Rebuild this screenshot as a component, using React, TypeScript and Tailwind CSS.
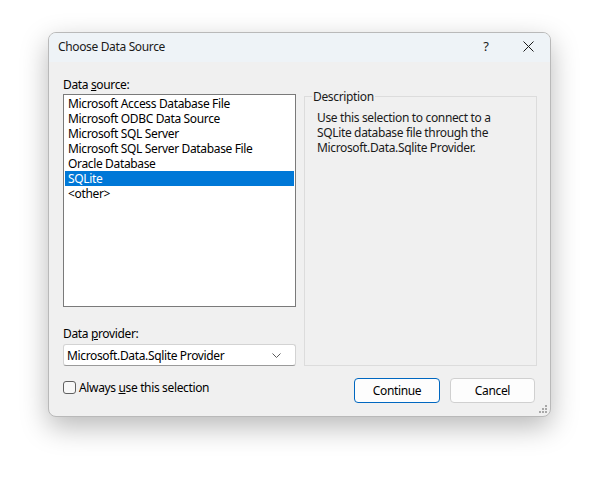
import type { FC } from 'react';

const sources = [
    'Microsoft Access Database File',
    'Microsoft ODBC Data Source',
    'Microsoft SQL Server',
    'Microsoft SQL Server Database File',
    'Oracle Database',
    'SQLite',
    '<other>',
];

const font = { fontFamily: '"Noto Sans", "Open Sans", sans-serif' };

const App: FC = () => {
    const selected = 'SQLite';

    return (
        <div className="w-[600px] h-[498px] bg-white pl-[48px] pt-[32px] text-[12px] leading-[15px] tracking-[-0.35px] text-black" style={font}>
            <div className="relative w-[503px] h-[385px] flex flex-col rounded-[8px] border border-[#b9b9b9] bg-[#f0f0f0] shadow-[0_10px_28px_rgba(0,0,0,0.28)] overflow-hidden">
                {/* Title bar */}
                <div className="h-[29px] shrink-0 flex items-center bg-[#eef3f7] pl-[9px] pb-[2px]">
                    <span className="flex-1 text-[#1a1a1a]">Choose Data Source</span>
                    <span className="w-[20px] text-center text-[13px] text-[#1a1a1a] mr-[27px]">?</span>
                    <svg className="w-[11px] h-[11px] mr-[16px]" viewBox="0 0 11 11" fill="none" stroke="#1a1a1a" strokeWidth={1}>
                        <path d="M0.5 0.5l10 10M10.5 0.5l-10 10" />
                    </svg>
                </div>

                {/* Body */}
                <div className="flex-1 flex flex-col pl-[14px] pr-[13px] pt-[15px]">
                    <div className="flex gap-[8px]">
                        {/* Left column */}
                        <div className="w-[233px] flex flex-col">
                            <div className="h-[17px]">
                                Data <span className="underline">s</span>ource:
                            </div>
                            <div className="h-[213px] border border-[#7a7a7a] bg-white pt-[1px] px-[1px]">
                                {sources.map((s) => (
                                    <div
                                        key={s}
                                        className={`h-[15px] pl-[3px] whitespace-nowrap ${s === selected ? 'bg-[#0078d7] text-white' : ''}`}
                                    >
                                        {s}
                                    </div>
                                ))}
                            </div>
                            <div className="mt-[19px] h-[18px]">
                                Data <span className="underline">p</span>rovider:
                            </div>
                            <div className="h-[22px] flex items-center border border-[#d3d3d3] border-b-[#9a9a9a] rounded-[3px] bg-white pl-[3px] pr-[14px]">
                                <span className="flex-1">Microsoft.Data.Sqlite Provider</span>
                                <svg className="w-[9px] h-[5px]" viewBox="0 0 9 5" fill="none" stroke="#5a5a5a" strokeWidth={1}>
                                    <path d="M0.5 0.5l4 4 4-4" />
                                </svg>
                            </div>
                        </div>

                        {/* Right column: group box */}
                        <div className="relative w-[233px] h-[270px] mt-[19px] border border-[#dcdcdc] pl-[12px] pt-[13px]">
                            <span className="absolute left-[7px] top-[-8px] bg-[#f0f0f0] px-[1px] text-[#1a1a1a]">Description</span>
                            <p className="w-[200px] text-[#1a1a1a]">
                                Use this selection to connect to a SQLite database file through the Microsoft.Data.Sqlite Provider.
                            </p>
                        </div>
                    </div>

                    {/* Bottom row */}
                    <div className="mt-[12px] flex items-start">
                        <label className="flex-1 flex items-center gap-[3px] mt-[2px]">
                            <span className="w-[13px] h-[13px] rounded-[3px] border border-[#606060] bg-[#f7f7f7]" />
                            <span>
                                Always <span className="underline">u</span>se this selection
                            </span>
                        </label>
                        <button className="w-[86px] h-[25px] rounded-[4px] border border-[#0067c0] bg-[#fdfdfd] mr-[10px]">
                            Continue
                        </button>
                        <button className="w-[85px] h-[25px] rounded-[4px] border border-[#d0d0d0] bg-[#fdfdfd] mr-[2px]">
                            Cancel
                        </button>
                    </div>
                </div>

                {/* Resize grip */}
                <svg className="absolute right-[3px] bottom-[3px] w-[8px] h-[8px]" viewBox="0 0 8 8" fill="#a8a8a8">
                    <rect x="6" y="0" width="2" height="2" />
                    <rect x="3" y="3" width="2" height="2" />
                    <rect x="6" y="3" width="2" height="2" />
                    <rect x="0" y="6" width="2" height="2" />
                    <rect x="3" y="6" width="2" height="2" />
                    <rect x="6" y="6" width="2" height="2" />
                </svg>
            </div>
        </div>
    );
};

export default App;
